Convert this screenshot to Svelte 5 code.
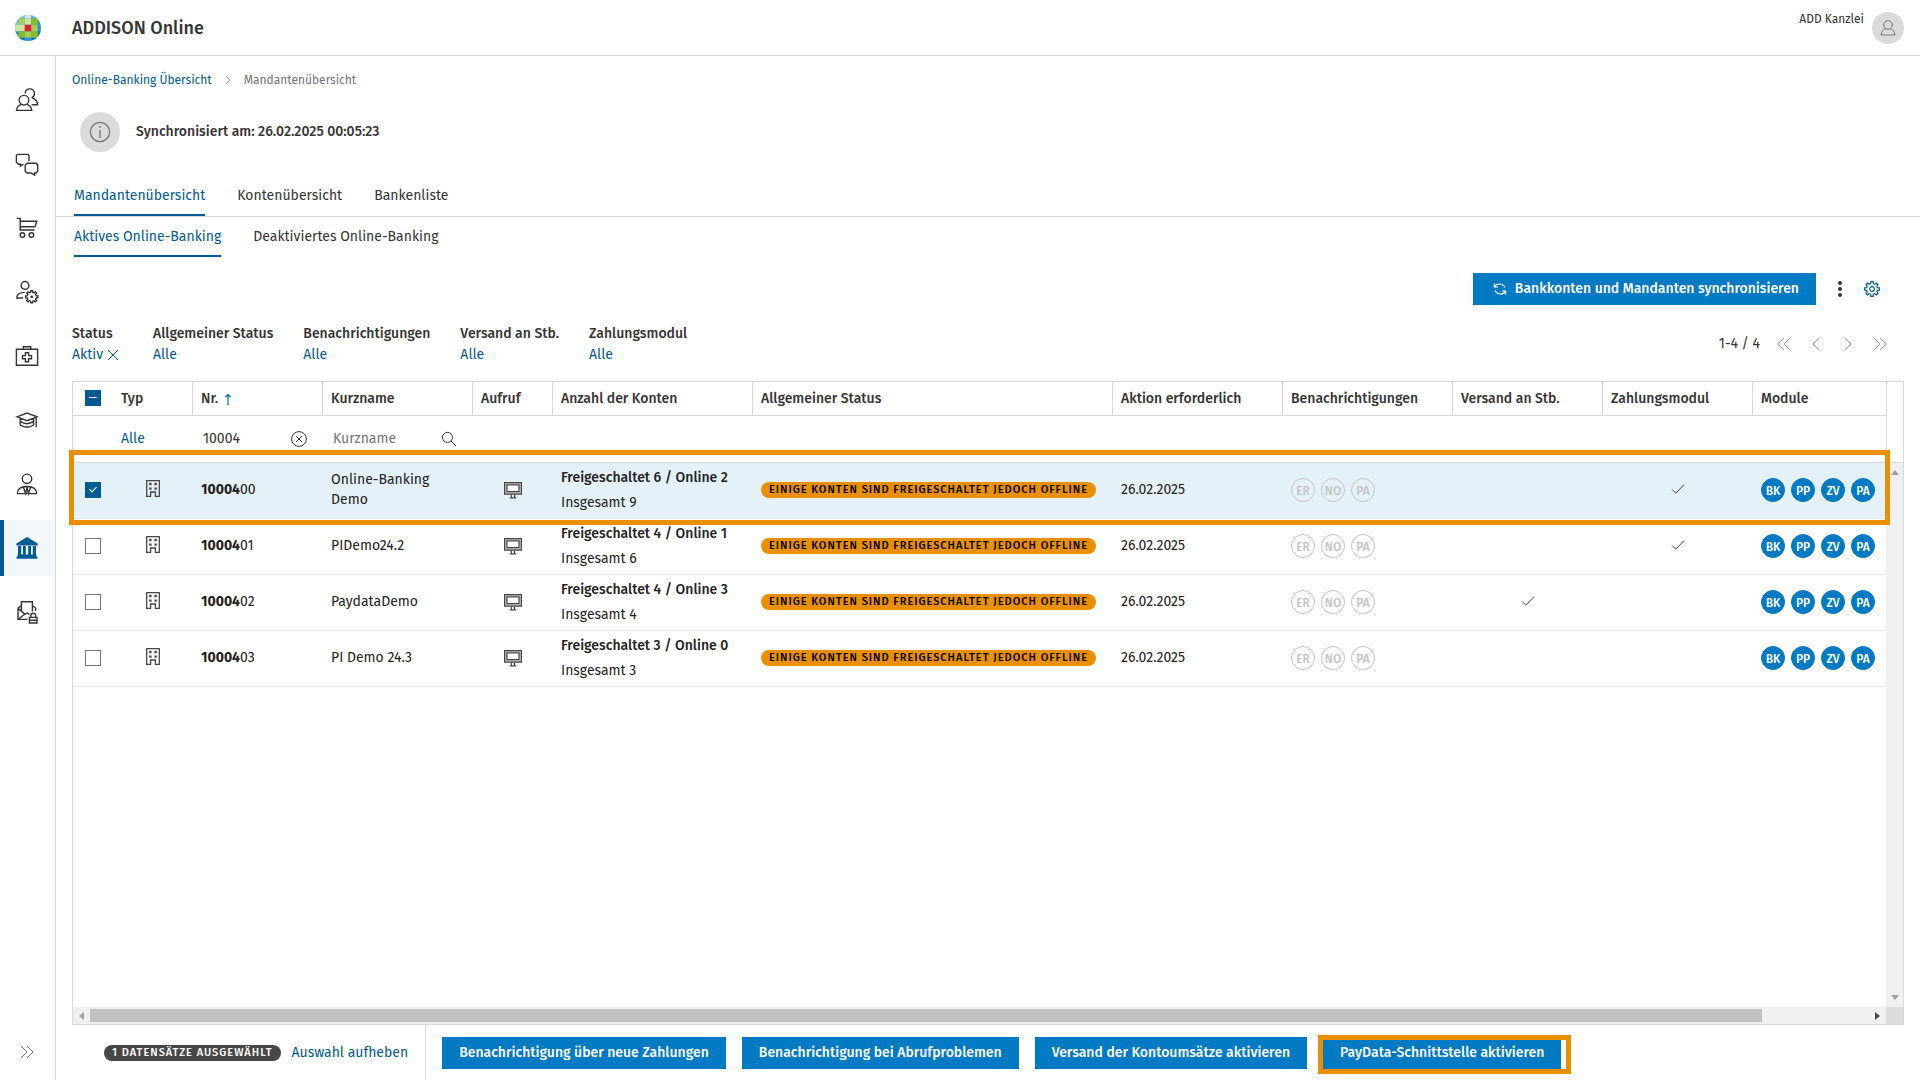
<script lang="ts">
  type Row = {
    nr: string;
    name: string;
    accounts: string;
    total: string;
    date: string;
    versand: boolean;
    zahlung: boolean;
  };

  const search = '10004';

  const rows: Row[] = [
    { nr: '00', name: 'Online-Banking Demo', accounts: 'Freigeschaltet 6 / Online 2', total: 'Insgesamt 9', date: '26.02.2025', versand: false, zahlung: true },
    { nr: '01', name: 'PIDemo24.2', accounts: 'Freigeschaltet 4 / Online 1', total: 'Insgesamt 6', date: '26.02.2025', versand: false, zahlung: true },
    { nr: '02', name: 'PaydataDemo', accounts: 'Freigeschaltet 4 / Online 3', total: 'Insgesamt 4', date: '26.02.2025', versand: true, zahlung: false },
    { nr: '03', name: 'PI Demo 24.3', accounts: 'Freigeschaltet 3 / Online 0', total: 'Insgesamt 3', date: '26.02.2025', versand: false, zahlung: false }
  ];

  const filters = [
    { label: 'Status', value: 'Aktiv', clear: true },
    { label: 'Allgemeiner Status', value: 'Alle', clear: false },
    { label: 'Benachrichtigungen', value: 'Alle', clear: false },
    { label: 'Versand an Stb.', value: 'Alle', clear: false },
    { label: 'Zahlungsmodul', value: 'Alle', clear: false }
  ];

  const nav = [
    'Mandanten',
    'Nachrichten',
    'Shop',
    'Benutzerverwaltung',
    'Service',
    'Akademie',
    'Mitarbeiter',
    'Online-Banking',
    'Sichere Post'
  ];
  const activeNav = 7;

  const notifications = ['ER', 'NO', 'PA'];
  const modules = ['BK', 'PP', 'ZV', 'PA'];
  const actions = [
    'Benachrichtigung über neue Zahlungen',
    'Benachrichtigung bei Abrufproblemen',
    'Versand der Kontoumsätze aktivieren',
    'PayData-Schnittstelle aktivieren'
  ];

  let selected = $state([true, false, false, false]);
  let nrQuery = $state(search);
  let nameQuery = $state('');

  const count = $derived(selected.filter(Boolean).length);

  function toggleAll() {
    const on = count < rows.length;
    selected = rows.map(() => on);
  }

  // outline of a cog wheel around (cx, cy), r1 = root radius, r2 = tooth radius
  function gear(cx: number, cy: number, r1: number, r2: number, teeth: number) {
    const pts: string[] = [];
    const step = (Math.PI * 2) / teeth;
    for (let i = 0; i < teeth; i++) {
      const a = i * step - Math.PI / 2;
      for (const [off, r] of [[-0.3, r1], [-0.2, r2], [0.2, r2], [0.3, r1]]) {
        pts.push(`${(cx + r * Math.cos(a + off * step)).toFixed(2)} ${(cy + r * Math.sin(a + off * step)).toFixed(2)}`);
      }
    }
    return 'M' + pts.join('L') + 'Z';
  }
</script>

{#snippet navIcon(i: number)}
  <svg class="nav-icon" viewBox="0 0 24 24" aria-hidden="true">
    {#if i === 0}
      <circle cx="9" cy="12.2" r="4.8" />
      <path d="M6.4 16.4C3.5 17.4 1.7 19.2 1.5 22.4H16.7C16.5 19.2 14.7 17.4 11.7 16.4" />
      <path d="M10.2 5.4A4.6 4.6 0 1 1 16.6 9.7M17.4 10C20.6 11.2 22.4 13.2 22.7 16.7H16.6" />
    {:else if i === 1}
      <path d="M8.4 12.2L5.4 14.2V12.2H3.4L1.4 10.2V4Q1.4 2.4 3 2.4H12.4Q14 2.4 14 4V9.2" />
      <path d="M12 11.2H21L22.7 12.9V19.2L21 21H19.6V23.2L16 21H12L10.2 19.2V13Z" />
    {:else if i === 2}
      <path d="M1.8 2.4H5.2V14H19.6M5.2 5.2H21.8L20 10.8H5.2" />
      <circle cx="7.4" cy="19" r="2.3" /><circle cx="16.4" cy="19" r="2.3" />
    {:else if i === 3}
      <circle cx="10" cy="5.4" r="3.9" />
      <path d="M9.8 12.4C5 12.4 1.9 14.4 1.7 18H8" />
      <path d={gear(16.7, 16.8, 4.6, 6.2, 8)} /><circle cx="16.7" cy="16.8" r="0.7" />
    {:else if i === 4}
      <path d="M1.4 5.3H22.6V21.2H1.4ZM8.3 5V2.7H15.7V5" />
      <path d="M10.4 8.8H13.6V11.6H16.5V14.8H13.6V17.7H10.4V14.8H7.5V11.6H10.4Z" />
    {:else if i === 5}
      <path d="M2 8.8L12 5L22 8.8L12 12.7ZM5.2 10.4V13.4Q12 18 18.6 13.4V10.4M5.2 13.4V17Q12 21.4 18.6 17V13.4M21.2 9.2V19.3" />
    {:else if i === 6}
      <circle cx="12" cy="6.8" r="4.7" />
      <path d="M2.4 21.6C2.4 16.8 6 14.5 12 14.5S21.6 16.8 21.6 21.6ZM8.4 15.2L10.6 21.4L12 15.4L13.4 21.4L15.6 15.2" />
    {:else if i === 7}
      <path class="solid" d="M12 1L22.6 7.6V9.4H1.4V7.6ZM3 10H6.2V18.6H3ZM8 10H10.8V18.6H8ZM13.2 10H16V18.6H13.2ZM17.8 10H21V18.6H17.8ZM2.6 18.6H21.4V20.4H22.4V22.8H1.6V20.4H2.6Z" />
    {:else}
      <path d="M6.4 11V1.8H17.4V11.4M6.4 5.6L3 8V19.4H12.6M3 8.4L10 14.4L12 13L14.6 14.4M3.2 19.2L9.6 14.2M17.6 5.8L20.6 8V11" />
      <path d="M14.4 17.4H22V23H14.4ZM15.8 17.2V15.4Q15.8 13.2 18.2 13.2T20.6 15.4V17.2M14.4 20.2H22" />
    {/if}
  </svg>
{/snippet}

{#snippet person()}
  <svg class="person" viewBox="0 0 18 18" aria-hidden="true">
    <circle cx="9" cy="6" r="4.3" />
    <path d="M6.6 9.8C3.8 10.8 2.4 12.6 2 16H16C15.6 12.6 14.2 10.8 11.4 9.8" />
  </svg>
{/snippet}

{#snippet tick()}
  <svg class="tick" viewBox="0 0 14 12" role="img" aria-label="Ja"><path d="M1 6.4L4.8 10.2L13 1.6" /></svg>
{/snippet}

<header class="topbar">
  <svg class="logo" viewBox="0 0 26 26" aria-hidden="true">
    <clipPath id="ball"><circle cx="13" cy="13" r="13" /></clipPath>
    <g clip-path="url(#ball)">
      <rect width="26" height="26" fill="#2f93d1" />
      <path fill="#8cc5e6" d="M3.2 0h6.6v3.4H3.2zM0 3.4h3.4v6.4H0z" />
      <path fill="#d3e8ee" d="M9.8 0h6.4v3.4H9.8z" />
      <path fill="#66b4df" d="M16.2 0h6.4v3.4h-6.4z" />
      <path fill="#0f76bd" d="M3.4 22.6h6.4V26H3.4zM16.2 22.6h6.4V26h-6.4zM22.6 16.2H26v6.4h-3.4z" />
      <path fill="#a9cf5e" d="M3.4 3.4h6.4v6.4H3.4z" />
      <path fill="#cfe4a4" d="M9.8 3.4h6.4v6.4H9.8zM0 9.8h9.8v6.4H0z" />
      <path fill="#85bc22" d="M16.2 3.4h6.4v6.4h-6.4zM3.4 16.2h6.4v6.4H3.4zM16.2 16.2h6.4v6.4h-6.4z" />
      <path fill="#a3cd4e" d="M9.8 16.2h6.4v6.4H9.8zM16.2 9.8h6.4v6.4h-6.4z" />
      <path fill="#e5202e" d="M9.8 9.8h6.4v6.4H9.8z" />
    </g>
  </svg>
  <h1>ADDISON Online</h1>
  <span class="account">ADD Kanzlei</span>
  <button class="avatar" type="button" aria-label="Benutzerkonto">{@render person()}</button>
</header>

<div class="shell">
  <nav class="sidebar" aria-label="Hauptmenü">
    {#each nav as label, i (label)}
      <a href="#nav-{i}" class="nav-item" class:active={i === activeNav} aria-label={label}>
        {@render navIcon(i)}
      </a>
    {/each}
    <button class="expand" type="button" aria-label="Menü ausklappen">
      <svg width="16" height="14" viewBox="0 0 16 14"><path d="M2 1l6 6-6 6M8 1l6 6-6 6" /></svg>
    </button>
  </nav>

  <main>
    <nav class="crumbs" aria-label="Brotkrumen">
      <a href="#overview">Online-Banking Übersicht</a>
      <svg width="6" height="10" viewBox="0 0 6 10" aria-hidden="true"><path d="M1 1l4 4-4 4" /></svg>
      <span>Mandantenübersicht</span>
    </nav>

    <div class="sync">
      <span class="info">
        <svg width="22" height="22" viewBox="0 0 22 22" aria-hidden="true">
          <circle cx="11" cy="11" r="9.6" /><path d="M11 9v8M11 5v2" />
        </svg>
      </span>
      <strong>Synchronisiert am: 26.02.2025 00:05:23</strong>
    </div>

    <nav class="tabs main-tabs">
      <a href="#clients" class="on">Mandantenübersicht</a>
      <a href="#accounts">Kontenübersicht</a>
      <a href="#banks">Bankenliste</a>
    </nav>
    <nav class="tabs sub-tabs">
      <a href="#active" class="on">Aktives Online-Banking</a>
      <a href="#inactive">Deaktiviertes Online-Banking</a>
    </nav>

    <div class="toolbar">
      <button class="primary sync-btn" type="button">
        <svg width="14" height="14" viewBox="0 0 14 14" aria-hidden="true">
          <path d="M1.4 1.4V5H5M1.6 4.6C3.4 1.4 9.6.6 12 5.4M12.6 12.6V9H9M12.4 9.4C10.6 12.6 4.4 13.4 2 8.6" />
        </svg>
        Bankkonten und Mandanten synchronisieren
      </button>
      <button class="icon-btn" type="button" aria-label="Weitere Aktionen">
        <svg width="16" height="16" viewBox="0 0 16 16" fill="#353535">
          <circle cx="8" cy="2" r="2" /><circle cx="8" cy="8" r="2" /><circle cx="8" cy="14" r="2" />
        </svg>
      </button>
      <button class="icon-btn" type="button" aria-label="Einstellungen">
        <svg class="cog" width="16" height="16" viewBox="0 0 16 16">
          <path d={gear(8, 8, 5.6, 7.4, 8)} /><circle cx="8" cy="8" r="2.3" />
        </svg>
      </button>
    </div>

    <div class="filter-bar">
      {#each filters as f (f.label)}
        <div class="filter">
          <b>{f.label}</b>
          <button type="button" class="link">
            {f.value}
            {#if f.clear}
              <svg width="12" height="12" viewBox="0 0 12 12" aria-hidden="true"><path d="M1 1l10 10M11 1L1 11" /></svg>
            {/if}
          </button>
        </div>
      {/each}
      <div class="pager">
        <span>1-4 / 4</span>
        <button type="button" aria-label="Erste Seite"><svg width="16" height="14" viewBox="0 0 16 14"><path d="M8 1L2 7l6 6M14 1L8 7l6 6" /></svg></button>
        <button type="button" aria-label="Vorherige Seite"><svg width="16" height="14" viewBox="0 0 16 14"><path d="M11 1L5 7l6 6" /></svg></button>
        <button type="button" aria-label="Nächste Seite"><svg width="16" height="14" viewBox="0 0 16 14"><path d="M5 1l6 6-6 6" /></svg></button>
        <button type="button" aria-label="Letzte Seite"><svg width="16" height="14" viewBox="0 0 16 14"><path d="M2 1l6 6-6 6M8 1l6 6-6 6" /></svg></button>
      </div>
    </div>

    <div class="grid">
      <div class="grid-view">
        <table>
          <colgroup>
            <col class="w-check" /><col class="w-typ" /><col class="w-nr" /><col class="w-name" />
            <col class="w-call" /><col class="w-acc" /><col /><col class="w-date" />
            <col class="w-date" /><col class="w-flag" /><col class="w-flag" /><col class="w-mod" />
          </colgroup>
          <thead>
            <tr class="head">
              <th class="plain">
                <input
                  type="checkbox"
                  aria-label="Alle auswählen"
                  checked={count === rows.length}
                  indeterminate={count > 0 && count < rows.length}
                  onchange={toggleAll}
                />
              </th>
              <th>Typ</th>
              <th>
                Nr.
                <svg class="sort" width="8" height="12" viewBox="0 0 8 12" aria-hidden="true"><path d="M4 12V1.6M1.4 4.2L4 1.4L6.6 4.2" /></svg>
              </th>
              <th>Kurzname</th>
              <th>Aufruf</th>
              <th>Anzahl der Konten</th>
              <th>Allgemeiner Status</th>
              <th>Aktion erforderlich</th>
              <th>Benachrichtigungen</th>
              <th>Versand an Stb.</th>
              <th>Zahlungsmodul</th>
              <th>Module</th>
            </tr>
            <tr class="search">
              <td></td>
              <td><button type="button" class="link">Alle</button></td>
              <td>
                <div class="field">
                  <input type="text" aria-label="Nr." bind:value={nrQuery} />
                  <button type="button" aria-label="Suche löschen" onclick={() => (nrQuery = '')}>
                    <svg width="16" height="16" viewBox="0 0 16 16"><circle cx="8" cy="8" r="7.4" /><path d="M5 5l6 6M11 5l-6 6" /></svg>
                  </button>
                </div>
              </td>
              <td>
                <div class="field">
                  <input type="text" aria-label="Kurzname" placeholder="Kurzname" bind:value={nameQuery} />
                  <button type="button" aria-label="Suchen">
                    <svg width="16" height="16" viewBox="0 0 16 16"><circle cx="6.4" cy="6.4" r="5" /><path d="M10 10l5 5" /></svg>
                  </button>
                </div>
              </td>
              <td colspan="8"></td>
            </tr>
          </thead>
          <tbody>
            {#each rows as row, i (row.nr)}
              <tr class:selected={selected[i]} class:marked={i === 0}>
                <td><input type="checkbox" aria-label="{search}{row.nr} auswählen" bind:checked={selected[i]} /></td>
                <td class="mid raised">
                  <svg class="typ-icon" width="14" height="17" viewBox="0 0 14 17" role="img" aria-label="Firma">
                    <path d="M.7 16.3V.7H13.3V16.3H9.4V12H4.6V16.3Z" />
                    <path class="win" d="M3.2 2.8h2.4v2.4H3.2zM8.4 2.8h2.4v2.4H8.4zM3.2 7.4h2.4v2.4H3.2zM8.4 7.4h2.4v2.4H8.4z" />
                  </svg>
                </td>
                <td><b>{search}</b>{row.nr}</td>
                <td class="name">{row.name}</td>
                <td class="mid">
                  <button class="icon-btn call" type="button" aria-label="Mandant aufrufen">
                    <svg width="18" height="18" viewBox="0 0 18 18">
                      <path d="M.6 1.6H17.4V13.2H.6Z" fill="#c4c4c4" /><path d="M3 3.8H15V10.6H3Z" fill="#fff" />
                      <path d="M7.4 13.4V16.4M10.6 13.4V16.4M5.8 16.8H12.2" />
                    </svg>
                  </button>
                </td>
                <td class="acc"><b>{row.accounts}</b><br />{row.total}</td>
                <td><span class="badge">Einige Konten sind freigeschaltet jedoch offline</span></td>
                <td>{row.date}</td>
                <td>
                  <div class="dots">{#each notifications as n}<span class="dot off">{n}</span>{/each}</div>
                </td>
                <td class="mid raised">{#if row.versand}{@render tick()}{/if}</td>
                <td class="mid raised">{#if row.zahlung}{@render tick()}{/if}</td>
                <td>
                  <div class="dots">{#each modules as m}<span class="dot">{m}</span>{/each}</div>
                </td>
              </tr>
            {/each}
          </tbody>
        </table>
      </div>
      <div class="vside">
        <div class="vhead"></div>
        <div class="vbar">
          <svg width="8" height="5" viewBox="0 0 8 5"><path d="M0 5L4 0l4 5z" /></svg>
          <svg width="8" height="5" viewBox="0 0 8 5"><path d="M0 0h8L4 5z" /></svg>
        </div>
      </div>
      <div class="hbar">
        <svg width="5" height="8" viewBox="0 0 5 8"><path d="M5 0v8L0 4z" /></svg>
        <div class="track"><div class="thumb"></div></div>
        <svg class="dark" width="5" height="8" viewBox="0 0 5 8"><path d="M0 0v8l5-4z" /></svg>
      </div>
      <div class="corner"></div>
    </div>

    <footer>
      <div class="selection">
        <span class="count">{count} Datensätze ausgewählt</span>
        <button type="button" class="link" onclick={() => (selected = rows.map(() => false))}>Auswahl aufheben</button>
      </div>
      <div class="actions">
        {#each actions as a, i (a)}
          <span class="action" class:framed={i === 3}><button type="button" class="primary">{a}</button></span>
        {/each}
      </div>
    </footer>
  </main>
</div>

<style>
  :global(body) {
    background: #fff;
  }
  :global(#app) {
    display: flex;
    flex-direction: column;
    min-height: 100vh;
    color: #353535;
    font-family: 'Fira Sans', Roboto, sans-serif;
    font-size: 14px;
    line-height: 20px;
  }
  button,
  input {
    font: inherit;
    color: inherit;
    margin: 0;
  }
  button {
    background: none;
    border: none;
    padding: 0;
    cursor: pointer;
  }
  a {
    color: inherit;
    text-decoration: none;
  }
  b,
  strong,
  th {
    font-weight: 500;
  }
  svg {
    display: block;
    flex: none;
  }
  .link {
    display: inline-flex;
    align-items: center;
    gap: 4px;
    color: #005b92;
  }

  /* top bar */
  .topbar {
    display: flex;
    align-items: center;
    box-sizing: border-box;
    height: 56px;
    padding: 0 16px 0 15px;
    border-bottom: 1px solid #d9d9d9;
  }
  .logo {
    width: 26px;
    height: 26px;
  }
  h1 {
    flex: 1;
    margin: 0 0 0 31px;
    font-size: 18px;
    font-weight: 500;
    line-height: 24px;
  }
  .account {
    align-self: flex-start;
    margin: 9px 8px 0 0;
    font-size: 12px;
  }
  .avatar {
    display: grid;
    place-items: center;
    width: 32px;
    height: 32px;
    border-radius: 50%;
    background: #dadada;
  }
  .person {
    width: 18px;
    height: 18px;
    fill: none;
    stroke: #757575;
  }

  /* sidebar */
  .shell {
    display: flex;
    flex: 1;
  }
  .sidebar {
    display: flex;
    flex-direction: column;
    gap: 8px;
    box-sizing: border-box;
    width: 56px;
    padding: 16px 0;
    border-right: 1px solid #d9d9d9;
  }
  .nav-item {
    display: grid;
    place-items: center;
    height: 56px;
    padding-right: 1px;
    color: #353535;
  }
  .nav-item.active {
    background: #f1f7fb;
    box-shadow: inset 4px 0 #005b92;
    color: #005b92;
  }
  .nav-icon {
    width: 24px;
    height: 24px;
    fill: none;
    stroke: currentColor;
    stroke-width: 1.4;
  }
  .solid {
    fill: currentColor;
    stroke: none;
  }
  .expand {
    display: grid;
    place-items: center;
    height: 24px;
    margin-top: auto;
    padding-right: 1px;
  }
  .expand svg {
    fill: none;
    stroke: #757575;
  }

  main {
    display: flex;
    flex: 1;
    flex-direction: column;
    min-width: 0;
  }
  .crumbs {
    display: flex;
    align-items: center;
    gap: 13px;
    padding: 14px 16px 0;
    font-size: 12px;
    color: #757575;
  }
  .crumbs a {
    color: #005b92;
  }
  .crumbs svg {
    fill: none;
    stroke: #a0a0a0;
  }
  .sync {
    display: flex;
    align-items: center;
    gap: 16px;
    padding: 22px 24px 0;
  }
  .info {
    display: grid;
    place-items: center;
    width: 40px;
    height: 40px;
    border-radius: 50%;
    background: #dadada;
  }
  .info svg {
    fill: none;
    stroke: #757575;
    stroke-width: 1.3;
  }

  /* tabs */
  .tabs {
    display: flex;
    gap: 32px;
    padding: 0 18px;
  }
  .main-tabs {
    margin-top: 32px;
    border-bottom: 1px solid #d9d9d9;
  }
  .tabs a {
    border-bottom: 2px solid transparent;
  }
  .main-tabs a {
    padding: 2px 0 8px;
  }
  .sub-tabs a {
    padding: 10px 0 8px;
  }
  .tabs .on {
    border-color: #005b92;
    color: #005b92;
  }

  .primary {
    height: 32px;
    padding: 0 17px;
    background: #007ac3;
    color: #fff;
    font-weight: 500;
    white-space: nowrap;
  }
  .icon-btn {
    display: grid;
    place-items: center;
    width: 16px;
    height: 16px;
  }
  .toolbar {
    display: flex;
    align-items: center;
    justify-content: flex-end;
    gap: 16px;
    padding: 16px 40px 0 16px;
  }
  .sync-btn {
    display: flex;
    align-items: center;
    gap: 8px;
    padding: 0 17px 0 20px;
  }
  .sync-btn svg {
    fill: none;
    stroke: #fff;
    stroke-width: 1.2;
  }
  .cog {
    fill: none;
    stroke: #005b92;
    stroke-width: 1.2;
  }

  /* filters + paging */
  .filter-bar {
    display: flex;
    align-items: flex-start;
    gap: 30px;
    padding: 19px 16px 0;
  }
  .filter {
    display: flex;
    flex-direction: column;
    gap: 1px;
    align-items: flex-start;
  }
  .filter svg {
    fill: none;
    stroke: #005b92;
  }
  .filter:first-child {
    width: 51px;
  }
  .pager {
    display: flex;
    align-items: center;
    gap: 16px;
    margin: 10px 16px 0 auto;
  }
  .pager svg {
    fill: none;
    stroke: #a0a0a0;
  }

  /* grid */
  .grid {
    display: grid;
    flex: 1;
    grid-template-columns: minmax(0, 1fr) 17px;
    grid-template-rows: 1fr 17px;
    margin: 16px 16px 0;
    border: 1px solid #d9d9d9;
  }
  table {
    width: 100%;
    border-spacing: 0;
    table-layout: fixed;
  }
  .w-check { width: 40px; }
  .w-typ { width: 80px; }
  .w-nr { width: 130px; }
  .w-name { width: 150px; }
  .w-call { width: 80px; }
  .w-acc { width: 200px; }
  .w-date { width: 170px; }
  .w-flag { width: 150px; }
  .w-mod { width: 133px; }
  th,
  td {
    box-sizing: border-box;
    padding: 0 8px;
    text-align: left;
    white-space: nowrap;
  }
  .head th {
    height: 34px;
    border-right: 1px solid #d9d9d9;
    border-bottom: 1px solid #d9d9d9;
  }
  .head .plain,
  .head th:last-child {
    border-right: none;
  }
  .head .plain {
    padding-bottom: 2px;
  }
  th:first-child,
  td:first-child {
    padding-left: 12px;
  }
  .sort {
    display: inline-block;
    margin-left: 2px;
    vertical-align: -2px;
    fill: none;
    stroke: #007ac3;
    stroke-width: 1.3;
  }
  .search td {
    height: 47px;
    border-bottom: 1px solid #d9d9d9;
  }
  .field {
    display: flex;
    align-items: center;
    padding: 0 8px 0 2px;
  }
  .field input {
    flex: 1;
    min-width: 0;
    padding: 0;
    border: none;
    outline: none;
    background: none;
  }
  .field input::placeholder {
    color: #757575;
    opacity: 1;
  }
  .field svg {
    fill: none;
    stroke: #353535;
  }
  tbody td {
    height: 56px;
    padding-bottom: 2px;
    border-bottom: 1px solid #e8e8e8;
    color: #232323;
  }
  tbody tr.selected td {
    background: #e5f1f9;
  }
  td:nth-child(3) b {
    font-weight: 700;
  }
  .name {
    padding-right: 40px;
    white-space: normal;
  }
  .acc {
    line-height: 25px;
  }
  .mid {
    text-align: center;
  }
  .mid svg,
  .mid button {
    margin: 0 auto;
  }
  .raised {
    padding-bottom: 4px;
  }
  .typ-icon {
    fill: none;
    stroke: #474747;
    stroke-width: 1.3;
  }
  .win {
    fill: #474747;
    stroke: none;
  }
  .call {
    width: 18px;
    height: 18px;
  }
  .call svg {
    fill: none;
    stroke: #474747;
    stroke-width: 1.2;
  }
  .tick {
    width: 14px;
    height: 12px;
    fill: none;
    stroke: #474747;
  }
  .marked {
    position: relative;
  }
  /* frame around the highlighted client */
  .marked td:last-child::after {
    content: '';
    position: absolute;
    inset: -13px -4px -6px -4px;
    border: 5px solid #ea8f00;
    pointer-events: none;
  }

  input[type='checkbox'] {
    appearance: none;
    display: block;
    box-sizing: border-box;
    width: 16px;
    height: 16px;
    border: 1px solid #757575;
    background: #fff;
    position: relative;
  }
  input[type='checkbox']:checked,
  input[type='checkbox']:indeterminate {
    border-color: #005b92;
    background: #005b92;
  }
  input[type='checkbox']:checked::after {
    content: '';
    position: absolute;
    left: 5px;
    top: 2px;
    width: 3px;
    height: 6px;
    border: solid #fff;
    border-width: 0 1px 1px 0;
    transform: rotate(45deg);
  }
  input[type='checkbox']:indeterminate::after {
    content: '';
    position: absolute;
    left: 3px;
    top: 6px;
    width: 8px;
    height: 1px;
    background: #fff;
  }

  .badge,
  .count {
    display: inline-block;
    height: 16px;
    padding: 0 8px;
    border-radius: 8px;
    font-size: 11px;
    font-weight: 500;
    letter-spacing: 1px;
    line-height: 16px;
    text-transform: uppercase;
    vertical-align: middle;
    white-space: nowrap;
  }
  .badge {
    background: #ea8f00;
    color: #000;
  }
  .count {
    background: #474747;
    color: #fff;
  }
  .dots {
    display: flex;
    gap: 6px;
  }
  .dot {
    box-sizing: border-box;
    width: 24px;
    height: 24px;
    border: 1px solid #007ac3;
    border-radius: 50%;
    background: #007ac3;
    color: #fff;
    font-size: 12px;
    font-weight: 500;
    line-height: 24px;
    text-align: center;
  }
  .dot.off {
    border-color: #c4c4c4;
    background: none;
    color: #c4c4c4;
  }

  /* scrollbars */
  .vside {
    display: flex;
    flex-direction: column;
  }
  .vhead {
    box-sizing: border-box;
    height: 81px;
    border-left: 1px solid #d9d9d9;
    border-bottom: 1px solid #d9d9d9;
  }
  .vbar {
    display: flex;
    flex: 1;
    flex-direction: column;
    align-items: center;
    justify-content: space-between;
    padding: 7px 0;
    background: #f0f0f0;
  }
  .hbar {
    display: flex;
    align-items: center;
    gap: 6px;
    padding: 0 6px;
    background: #f0f0f0;
  }
  .track {
    flex: 1;
  }
  .thumb {
    width: 94%;
    height: 13px;
    background: #c1c1c1;
  }
  .vbar svg,
  .hbar svg {
    fill: #a0a0a0;
  }
  .hbar .dark {
    fill: #474747;
  }
  .corner {
    background: #dcdcdc;
  }

  /* footer */
  footer {
    display: flex;
    min-height: 55px;
  }
  .selection {
    display: flex;
    align-items: center;
    gap: 11px;
    padding: 0 17px 0 48px;
    border-right: 1px solid #d9d9d9;
  }
  .actions {
    display: flex;
    align-items: center;
    gap: 16px;
    padding-left: 16px;
  }
  .action {
    position: relative;
  }
  .framed::after {
    content: '';
    position: absolute;
    inset: -2px -10px -5px -5px;
    border: 5px solid #ea8f00;
    pointer-events: none;
  }
</style>
